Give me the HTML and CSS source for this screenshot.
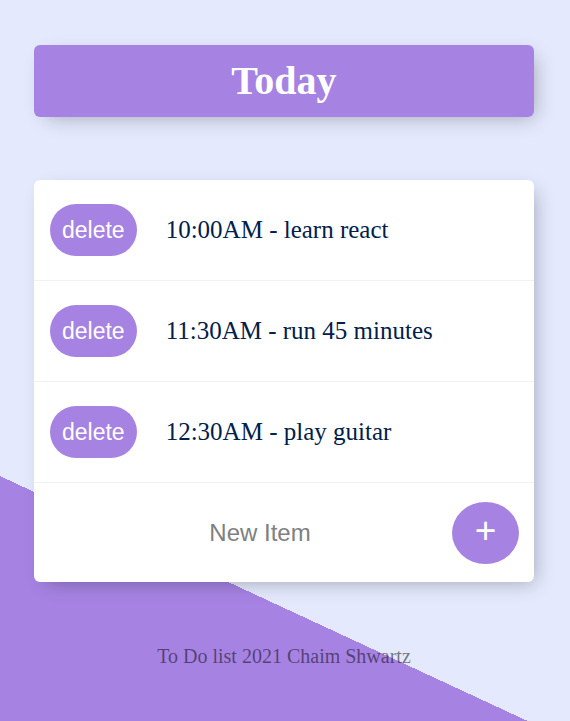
FILE: index.html
```html
<!DOCTYPE html>
<html>
<head>
<meta charset="utf-8">
<title>To Do List</title>
<link rel="stylesheet" href="styles.css">
</head>
<body>
<div class="page">
  <div class="box heading"><h1 class="title">Today</h1></div>
  <div class="box list">
    <div class="item"><button class="delete">delete</button><p class="text">10:00AM - learn react</p></div>
    <div class="item"><button class="delete">delete</button><p class="text">11:30AM - run 45 minutes</p></div>
    <div class="item"><button class="delete">delete</button><p class="text">12:30AM - play guitar</p></div>
    <form class="item new-item">
      <input class="new-input" type="text" placeholder="New Item">
      <button class="add" type="button">+</button>
    </form>
  </div>
  <footer class="footer">To Do list 2021 Chaim Shwartz</footer>
</div>
</body>
</html>
```
FILE: styles.css
```css
html {
  background-color: #E4E9FD;
  background-image: linear-gradient(24.9deg, #A683E3 24.85%, #E4E9FD 24.85%);
  height: 100%;
}
body {
  margin: 0;
  height: 100%;
  overflow: hidden;
  font-family: "Liberation Serif", serif;
}
.page {
  padding-top: 45px;
  padding-right: 2px;
  display: flex;
  flex-direction: column;
  align-items: center;
}
.box {
  width: 500px;
  background: #fff;
  border-radius: 6px;
  box-shadow: 6px 6px 19px -6px rgba(0, 0, 0, 0.3);
}
.heading {
  background-color: #A683E3;
  height: 72px;
  display: flex;
  align-items: center;
  justify-content: center;
}
.title {
  margin: 0;
  color: #fff;
  font-size: 40px;
  font-weight: bold;
  line-height: 1;
}
.list {
  margin-top: 63px;
}
.item {
  height: 100px;
  display: flex;
  align-items: center;
  border-bottom: 1px solid #F1F1F1;
  margin: 0;
}
.item:last-child {
  border-bottom: 0;
  height: 99px;
}
.delete {
  margin-left: 16px;
  height: 52px;
  padding: 0 12px;
  border: 0;
  border-radius: 26px;
  background: #A683E3;
  color: #fff;
  font-family: "Liberation Sans", Arial, sans-serif;
  font-size: 23px;
}
.text {
  margin: 0 0 0 29px;
  font-size: 25px;
  color: #00204a;
}
.new-input {
  flex: 1;
  min-width: 0;
  height: 62px;
  border: none;
  outline: none;
  padding: 0 0 0 34px;
  margin: 0;
  text-align: center;
  font-family: "Liberation Sans", Arial, sans-serif;
  font-size: 24px;
  background: transparent;
}
.new-input::placeholder {
  color: grey;
  opacity: 1;
}
.add {
  width: 67px;
  height: 62px;
  margin-right: 15px;
  border: 0;
  border-radius: 50%;
  background: #A683E3;
  color: #fff;
  font-family: "Liberation Sans", Arial, sans-serif;
  font-size: 37px;
  line-height: 1;
  padding: 0 0 4px 0;
}
.footer {
  margin-top: 63px;
  color: rgba(0, 0, 0, 0.5);
  font-size: 20px;
  text-align: center;
}
```
